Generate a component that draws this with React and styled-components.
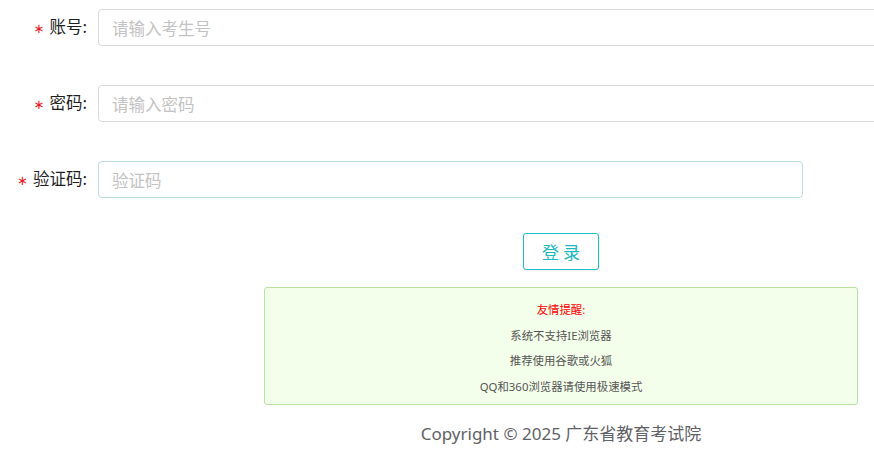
import React from "react";
import styled, { createGlobalStyle } from "styled-components";

const Global = createGlobalStyle`
  html, body { margin: 0; padding: 0; overflow: hidden; background: #fff; }
  body { font-family: "Noto Sans", "Noto Sans CJK SC", sans-serif; }
  * { box-sizing: border-box; }
`;

const Page = styled.div`
  width: 1024px;
  padding-top: 9px;
`;

const Row = styled.div`
  display: flex;
  align-items: center;
  height: 37px;
  margin-bottom: ${(p) => p.$gap}px;
`;

const Label = styled.label`
  width: 98px;
  flex: none;
  text-align: right;
  padding-right: 11px;
  font-size: 16.5px;
  line-height: 37px;
  color: #1f1f1f;
  font-family: "Noto Sans CJK SC", sans-serif;
  &::before {
    content: "∗";
    display: inline-block;
    font-family: "DejaVu Sans", sans-serif;
    font-size: 13px;
    color: #f0141e;
    margin-right: 5px;
  }
`;

const Input = styled.input`
  width: ${(p) => p.$width};
  height: 37px;
  border: 1px solid ${(p) => (p.$accent ? "#bcdcdc" : "#dadada")};
  border-radius: 4px;
  padding: 0 13px;
  font-size: 16.5px;
  font-family: "Noto Sans CJK SC", sans-serif;
  color: #333;
  outline: none;
  background: #fff;
  &::placeholder { color: #c3c3c3; }
`;

const Content = styled.div`
  margin-left: 98px;
  width: 926px;
  display: flex;
  flex-direction: column;
  align-items: center;
`;

const LoginButton = styled.button`
  width: 76px;
  height: 37px;
  border: 1px solid #1dbec5;
  border-radius: 3px;
  background: #fff;
  color: #1cb8c0;
  font-size: 17px;
  font-family: "Noto Sans CJK SC", sans-serif;
  box-shadow: 0 1px 2px rgba(0, 0, 0, 0.08);
  cursor: pointer;
  padding: 0;
  margin-bottom: 17px;
`;

const Tips = styled.div`
  width: 594px;
  height: 118px;
  background: #f4ffeb;
  border: 1px solid #b7e3a0;
  border-radius: 3px;
  padding-top: 9px;
  text-align: center;
`;

const TipLine = styled.p`
  margin: 0;
  font-size: 11.4px;
  line-height: 25.7px;
  color: ${(p) => (p.$title ? "#ff0000" : "#555")};
  font-family: "Noto Sans", "Noto Sans CJK SC", sans-serif;
`;

const Copyright = styled.div`
  margin-top: 17px;
  font-size: 17px;
  line-height: 24px;
  color: #5f6266;
  font-family: "Noto Sans", "Noto Sans CJK SC", sans-serif;
`;

export default function App() {
  return (
    <Page>
      <Global />
      <Row $gap={39}>
        <Label>账号:</Label>
        <Input $width="926px" placeholder="请输入考生号" />
      </Row>
      <Row $gap={39}>
        <Label>密码:</Label>
        <Input $width="926px" type="password" placeholder="请输入密码" />
      </Row>
      <Row $gap={35}>
        <Label>验证码:</Label>
        <Input $width="705px" $accent placeholder="验证码" />
      </Row>
      <Content>
        <LoginButton>登 录</LoginButton>
        <Tips>
          <TipLine $title>友情提醒:</TipLine>
          <TipLine>系统不支持IE浏览器</TipLine>
          <TipLine>推荐使用谷歌或火狐</TipLine>
          <TipLine>QQ和360浏览器请使用极速模式</TipLine>
        </Tips>
        <Copyright>Copyright © 2025 广东省教育考试院</Copyright>
      </Content>
    </Page>
  );
}
